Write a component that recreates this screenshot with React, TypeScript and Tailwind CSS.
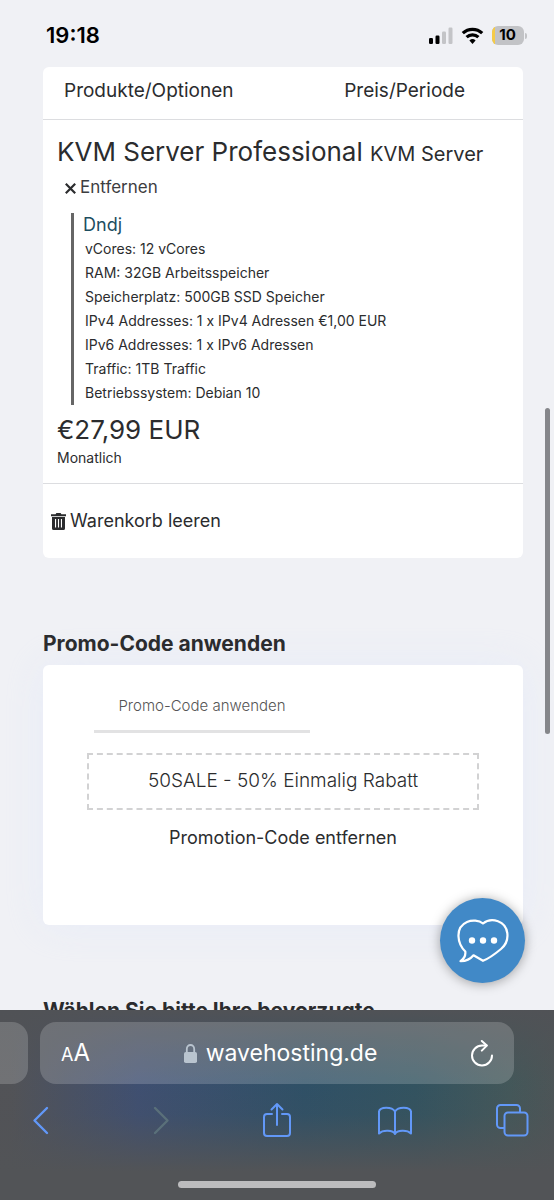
import type { ReactNode } from "react";

const options = [
  "vCores: 12 vCores",
  "RAM: 32GB Arbeitsspeicher",
  "Speicherplatz: 500GB SSD Speicher",
  "IPv4 Addresses: 1 x IPv4 Adressen €1,00 EUR",
  "IPv6 Addresses: 1 x IPv6 Adressen",
  "Traffic: 1TB Traffic",
  "Betriebssystem: Debian 10",
];

const StatusBar = () => {
  return (
    <header className="flex h-[67px] flex-none items-center justify-between pt-1 pr-[27px] pl-[46px] text-black">
      <span className="text-[22px] font-semibold">19:18</span>
      <div className="flex items-center gap-2">
        <svg width="24" height="17" viewBox="0 0 24 17" aria-label="Signal">
          <rect x="0" y="11" width="4" height="6" rx="1.2" />
          <rect x="6.5" y="8.5" width="4" height="8.5" rx="1.2" />
          <rect x="13" y="4.5" width="4" height="12.5" rx="1.2" fill="#c3c4c7" />
          <rect x="19.5" y="0.5" width="4" height="16.5" rx="1.2" fill="#c3c4c7" />
        </svg>
        <svg width="23" height="18" viewBox="0 0 22 18" fill="none" stroke="#000" strokeWidth="3.2" aria-label="WLAN">
          <path d="M1.3 6.2a14 14 0 0 1 19.4 0" />
          <path d="M5.1 10.2a8.5 8.5 0 0 1 11.8 0" />
          <path d="M7.9 13.5a4.6 4.6 0 0 1 6.2 0L11 17z" fill="#000" stroke="none" />
        </svg>
        <div className="flex items-center gap-px">
          <div className="flex h-[19px] w-8 items-center overflow-hidden rounded-md bg-[#c2c3c6] text-[15px] font-bold">
            <div className="h-full w-[3px] bg-[#f5cb47]" />
            <span className="flex-1 pr-1 text-center">10</span>
          </div>
          <div className="h-[6px] w-[2px] rounded-r-full bg-[#c2c3c6]" />
        </div>
      </div>
    </header>
  );
};

const CartCard = () => {
  return (
    <section className="rounded-md bg-white">
      <div className="flex h-[53px] items-center border-b border-[#dcdde0] pr-[58px] pb-[3px] pl-[21px] text-[19px]">
        <span className="flex-1">Produkte/Optionen</span>
        <span>Preis/Periode</span>
      </div>
      <div className="border-b border-[#dcdde0] px-[14px] pt-[14px] pb-[15px]">
        <h2 className="text-[26px] leading-9 whitespace-nowrap">
          KVM Server Professional <span className="text-xl">KVM Server</span>
        </h2>
        <button className="mt-[6px] flex h-6 items-center gap-1 pl-2 text-[17px] text-[#3d3d3f]">
          <svg width="11" height="11" viewBox="0 0 11 11" stroke="#2b2c2e" strokeWidth="2.2">
            <path d="M.8.8l9.4 9.4M10.2.8L.8 10.2" />
          </svg>
          Entfernen
        </button>
        <div className="mt-[13px] ml-[14px] border-l-3 border-[#666] pl-[9px]">
          <a href="#" className="block text-lg leading-6 text-[#1d4d5f]">
            Dndj
          </a>
          <ul className="pl-[2px] text-sm leading-6">
            {options.map((option) => (
              <li key={option}>{option}</li>
            ))}
          </ul>
        </div>
        <p className="mt-[7px] text-[26px] leading-9">€27,99 EUR</p>
        <p className="text-sm leading-5">Monatlich</p>
      </div>
      <button className="flex h-[74px] items-center gap-1 pl-2 text-lg">
        <svg width="15" height="17" viewBox="0 0 15 17" fill="#2b2c2e">
          <path d="M0 1.3h4.6L5.4 0h4.2l.8 1.3H15v2H0z" />
          <path
            fillRule="evenodd"
            d="M1 4h13v11.4a1.6 1.6 0 0 1-1.6 1.6H2.6A1.6 1.6 0 0 1 1 15.4zM4 6v8.500h1.100V6zM6.950 6v8.500h1.100V6zM9.900 6v8.500H11V6z"
          />
        </svg>
        Warenkorb leeren
      </button>
    </section>
  );
};

const PromoSection = () => {
  return (
    <section className="mt-[72px]">
      <h3 className="text-[21px] leading-7 font-bold">Promo-Code anwenden</h3>
      <div className="mt-[7px] rounded-md bg-white px-11 pt-[29px] pb-[75px] shadow-[0_0_40px_rgba(220,230,255,0.4)]">
        <button className="ml-[7px] block w-[216px] border-b-3 border-[#e2e2e3] pb-3 text-[15px] leading-6 font-light text-[#555]">
          Promo-Code anwenden
        </button>
        <p className="mt-5 flex h-[57px] items-center justify-center border-2 border-dashed border-[#d2d2d3] text-[19px] font-light">
          50SALE - 50% Einmalig Rabatt
        </p>
        <a href="#" className="mt-4 block text-center text-lg leading-6">
          Promotion-Code entfernen
        </a>
      </div>
    </section>
  );
};

const ChatButton = () => {
  return (
    <button
      aria-label="Chat"
      className="absolute right-[29px] bottom-[27px] flex size-[85px] items-center justify-center rounded-full bg-[#4189c7] shadow-[0_1px_12px_rgba(0,0,0,0.35)]"
    >
      <svg width="52" height="44" viewBox="0 0 52 44" fill="none" stroke="#fff" strokeWidth="2.2" strokeLinejoin="round">
        <path d="M26 4.500C22 1.200 15 .8 10 3 4 5.700 1.200 11.500 1.500 17.500 1.700 24 4.300 28.500 8.300 32.500 8.800 36.500 7.500 39.500 3.500 42.200 9.500 42.300 13.500 40 16.500 36.300L26 41.800C32 39.500 38 35 44 30 50 25 50.800 18 50.300 14 49.500 8 46 4 41 2.200 36 .6 30 1.200 26 4.500z" />
        <g fill="#fff" stroke="none">
          <circle cx="15" cy="21.5" r="3.2" />
          <circle cx="26" cy="21.5" r="3.2" />
          <circle cx="37" cy="21.5" r="3.2" />
        </g>
      </svg>
    </button>
  );
};

const ToolButton = ({ label, color = "text-[#6298f8]", children }: { label: string; color?: string; children: ReactNode }) => {
  return (
    <button aria-label={label} className={color}>
      <svg
        width="36"
        height="36"
        viewBox="0 0 36 36"
        fill="none"
        stroke="currentColor"
        strokeWidth="2"
        strokeLinecap="round"
        strokeLinejoin="round"
      >
        {children}
      </svg>
    </button>
  );
};

const BrowserBar = () => {
  return (
    <footer className="flex h-[190px] flex-none flex-col bg-[linear-gradient(to_bottom,#505256,rgba(80,82,86,0.1)_38%,rgba(80,82,86,0.2)_55%,#525457_85%),linear-gradient(to_right,#525357_2%,#3d4f74_25%,#2b5068_55%,#2f5361_75%,#42585a_92%,#4c5557)] pt-3">
      <div className="flex h-[62px] gap-3">
        <div className="w-7 flex-none rounded-r-2xl bg-white/18" />
        <div className="mr-10 flex flex-1 items-center justify-between rounded-2xl bg-white/18 px-[21px] text-white">
          <button aria-label="Textgröße" className="flex items-baseline">
            <span className="text-lg">A</span>
            <span className="text-2xl">A</span>
          </button>
          <button className="flex items-center gap-[9px] text-[23px]">
            <svg width="13" height="19" viewBox="0 0 13 19" className="text-[#b9c4cf]">
              <path d="M2.8 9V5a3.7 4 0 0 1 7.4 0v4" fill="none" stroke="currentColor" strokeWidth="1.8" />
              <rect x="0" y="8" width="13" height="11" rx="1.8" fill="currentColor" />
            </svg>
            wavehosting.de
          </button>
          <button aria-label="Neu laden">
            <svg width="22" height="27" viewBox="0 0 22 27" fill="none" stroke="#fff" strokeWidth="2" strokeLinecap="round" strokeLinejoin="round">
              <path d="M21 15.5A10 10 0 1 1 11 5.500h4.500" />
              <path d="M10.8 1l5 4.600-5 5" />
            </svg>
          </button>
        </div>
      </div>
      <nav className="flex h-[72px] items-center justify-between px-6">
        <ToolButton label="Zurück">
          <path d="M23 6L10.5 18.5 23 31" strokeWidth="2.4" />
        </ToolButton>
        <ToolButton label="Vorwärts" color="text-[#5a707a]">
          <path d="M13 6l12.5 12.5L13 31" strokeWidth="2.4" />
        </ToolButton>
        <ToolButton label="Teilen">
          <path d="M13 12H8a3 3 0 0 0-3 3v16a3 3 0 0 0 3 3h20a3 3 0 0 0 3-3V15a3 3 0 0 0-3-3h-5M18 23V2M12.5 7.500L18 2l5.500 5.500" />
        </ToolButton>
        <ToolButton label="Lesezeichen">
          <path d="M18 9.500V32c-2-4-12-4.500-16-.5V9.500C3 4.500 15 4.500 18 9.500c3-5 15-5 16 0v22c-4-4-14-3.500-16 .5" />
        </ToolButton>
        <ToolButton label="Tabs">
          <path d="M10 26H6.500A3.500 3.500 0 0 1 3 22.500v-16A3.500 3.500 0 0 1 6.500 3h16A3.500 3.500 0 0 1 26 6.500V10" />
          <rect x="10.5" y="10.5" width="23" height="23" rx="3.5" />
        </ToolButton>
      </nav>
      <div className="mx-auto mt-[25px] h-[7px] w-[198px] rounded-full bg-[#bcbcbe]" />
    </footer>
  );
};

const App = () => {
  return (
    <div className="flex h-screen flex-col overflow-hidden bg-[#f0f1f5] font-['Inter',sans-serif] text-[#2b2c2e]">
      <StatusBar />
      <main className="relative min-h-0 flex-1 overflow-hidden pr-[31px] pl-[43px]">
        <CartCard />
        <PromoSection />
        <h3 className="mt-[72px] text-[21px] leading-7 font-bold">Wählen Sie bitte Ihre bevorzugte</h3>
        <div className="absolute top-[341px] right-[4px] h-[326px] w-[5px] rounded-full bg-[#85868a]" />
        <ChatButton />
      </main>
      <BrowserBar />
    </div>
  );
};

export default App;
